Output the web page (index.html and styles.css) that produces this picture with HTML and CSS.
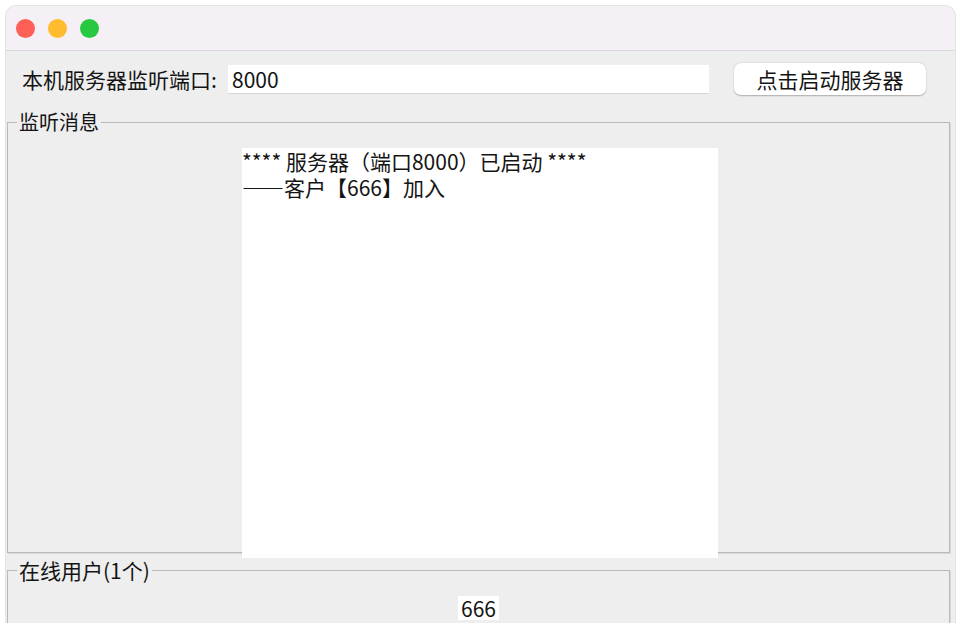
FILE: index.html
```html
<!DOCTYPE html>
<html lang="zh-CN">
<head>
<meta charset="utf-8">
<title>服务器</title>
<link rel="stylesheet" href="styles.css">
</head>
<body>
<div class="window">
  <div class="titlebar">
    <span class="light red"></span>
    <span class="light yellow"></span>
    <span class="light green"></span>
  </div>
  <div class="toprow">
    <label class="port-label">本机服务器监听端口:</label>
    <div class="port-input">8000</div>
    <button class="start-btn">点击启动服务器</button>
  </div>
  <div class="group group-log">
    <div class="legend">监听消息</div>
    <div class="log">
      <div class="log-line">**** 服务器（端口8000）已启动 ****</div>
      <div class="log-line">——客户【666】加入</div>
    </div>
  </div>
  <div class="group group-users">
    <div class="legend legend-users">在线用户(1个)</div>
    <div class="user-list">
      <span class="user">666</span>
    </div>
  </div>
</div>
</body>
</html>
```

FILE: styles.css
```css
html, body {
  margin: 0;
  padding: 0;
  background: #ffffff;
  overflow: hidden;
  height: 100%;
}

body {
  font-family: "Noto Sans CJK SC", "Noto Sans", sans-serif;
  color: #141414;
}

.window {
  margin: 6px 4px 0 6px;
  height: calc(100vh - 6px);
  background: #eeeeee;
  border-radius: 10px 10px 0 0;
  overflow: hidden;
  box-shadow: 0 0 0 1px #e4e4e4;
}

.titlebar {
  height: 44px;
  background: #f4f0f6;
  border-bottom: 1px solid #d9d7db;
  display: flex;
  align-items: center;
  gap: 13px;
  padding-left: 10px;
}

.light {
  width: 19px;
  height: 19px;
  border-radius: 50%;
  display: block;
}
.red { background: #fe5f57; }
.yellow { background: #febc2e; }
.green { background: #28c840; }

.toprow {
  display: flex;
  align-items: center;
  padding: 12px 0 0 16px;
  height: 32px;
}

.port-label {
  flex: none;
  width: 206px;
  font-size: 21px;
  line-height: 24px;
}

.port-input {
  flex: none;
  width: 481px;
  height: 29px;
  background: #ffffff;
  border-bottom: 1px solid #d6d6d6;
  font-size: 21px;
  line-height: 29px;
  padding-left: 4px;
  box-sizing: border-box;
}

.start-btn {
  flex: none;
  margin-left: 25px;
  width: 192px;
  height: 32px;
  background: #ffffff;
  border: none;
  border-radius: 7px;
  box-shadow: 0 0.5px 1.5px rgba(0, 0, 0, 0.28);
  font-family: "Noto Sans CJK SC", "Noto Sans", sans-serif;
  font-size: 21px;
  color: #141414;
  padding: 0;
  line-height: 32px;
}

.group {
  position: relative;
  margin-left: 1px;
  margin-right: 5px;
  border: 1px solid #b9b9b9;
  box-shadow: 1px 1px 0 #d8d8d8;
  box-sizing: border-box;
}

.legend {
  position: absolute;
  top: -12px;
  left: 9px;
  padding: 0 2px;
  background: #eeeeee;
  font-size: 20px;
  line-height: 22px;
}

.legend-users {
  font-size: 21px;
}

.group-log {
  margin-top: 27px;
  height: 431px;
}

.log {
  position: relative;
  margin: 25px 0 0 234px;
  width: 476px;
  height: 410px;
  background: #ffffff;
  font-size: 21px;
  line-height: 26px;
}

.log-line {
  white-space: pre;
}

.group-users {
  margin-top: 17px;
  height: 200px;
}

.user-list {
  display: flex;
  justify-content: center;
  margin-top: 25px;
}

.user {
  background: #ffffff;
  font-size: 21px;
  line-height: 24px;
  padding: 0 3px;
}
```
